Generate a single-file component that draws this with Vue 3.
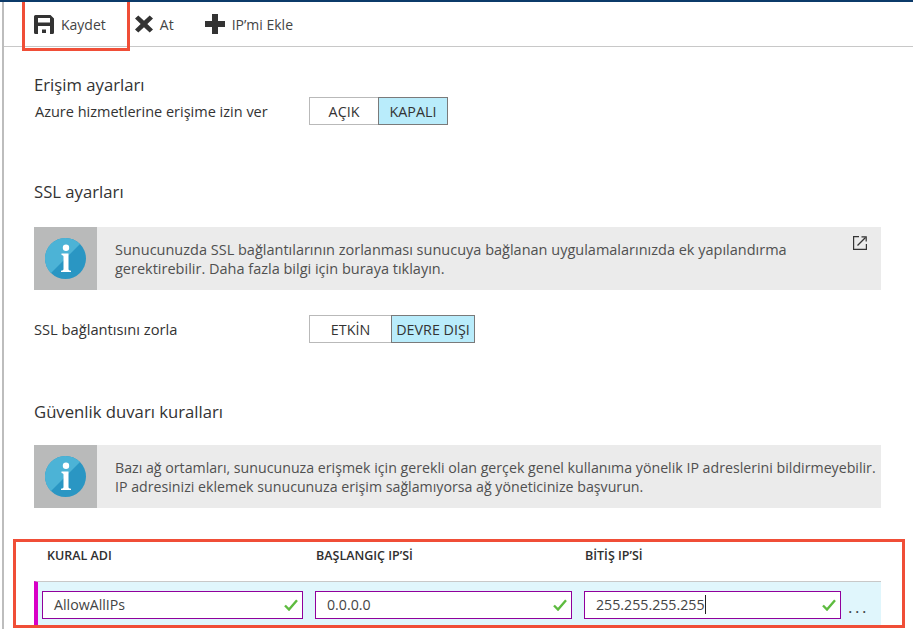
<script setup>
const rules = [
  { value: 'AllowAllIPs', caret: false },
  { value: '0.0.0.0', caret: false },
  { value: '255.255.255.255', caret: true },
]
</script>

<template>
  <div class="page">
    <div class="toolbar">
      <div class="tool save">
        <svg width="20" height="19" viewBox="0 0 20 19"><path fill="#333" fill-rule="evenodd" d="M1.500 0H16.500L20 3.500V17.500A1.500 1.500 0 0 1 18.500 19H1.500A1.500 1.500 0 0 1 0 17.500V1.500A1.500 1.500 0 0 1 1.500 0ZM4 3V7.500H16V3ZM4 11V19H16V11Z"/><rect x="8" y="14.500" width="4" height="3.500" fill="#333"/></svg>
        <span>Kaydet</span>
      </div>
      <div class="tool discard">
        <svg width="18" height="18" viewBox="0 0 19 18"><path fill="#333" d="M3.500 0 9.500 5.500 15.500 0 19 3.300 13 9l6 5.700L15.500 18 9.500 12.500 3.500 18 0 14.700 6 9 0 3.300Z"/></svg>
        <span>At</span>
      </div>
      <div class="tool add">
        <svg width="20" height="20" viewBox="0 0 20 20"><path fill="#333" d="M7 0h6v7h7v6h-7v7H7v-7H0V7h7Z"/></svg>
        <span>IP’mi Ekle</span>
      </div>
    </div>

    <div class="content">
      <h2 class="h-access">Erişim ayarları</h2>
      <div class="setting s-access">
        <span class="setting-label">Azure hizmetlerine erişime izin ver</span>
        <div class="toggle t-access">
          <span class="opt off">AÇIK</span>
          <span class="opt on">KAPALI</span>
        </div>
      </div>

      <h2 class="h-ssl">SSL ayarları</h2>
      <div class="info i-ssl">
        <div class="info-icon">
          <svg width="41" height="41" viewBox="0 0 41 41">
            <circle cx="20.500" cy="20.500" r="20.500" fill="#2a96c3"/>
            <path fill="#4cb3d6" d="M20.500 0A20.500 20.500 0 0 0 6 35L35 6A20.440 20.440 0 0 0 20.500 0Z"/>
            <circle cx="21" cy="9.700" r="3.200" fill="#fff"/>
            <path fill="#fff" d="M16.500 15.500h7v15.500c0 1 .9 1.500 2.500 1.700v1.300H16v-1.300c1.600-.2 2.500-.7 2.500-1.700V18.500c0-1-.8-1.500-2-1.600Z"/>
          </svg>
        </div>
        <p class="info-text narrow">Sunucunuzda SSL bağlantılarının zorlanması sunucuya bağlanan uygulamalarınızda ek yapılandırma gerektirebilir. Daha fazla bilgi için buraya tıklayın.</p>
        <svg class="external" width="14" height="14" viewBox="0 0 14 14" fill="none" stroke="#333" stroke-width="1.200"><path d="M6 .6H.6v12.800h12.800V8"/><path d="M4.500 9.500 12.500 1.500"/><path d="M8.500.8h4.700v4.700"/></svg>
      </div>
      <div class="setting s-ssl">
        <span class="setting-label">SSL bağlantısını zorla</span>
        <div class="toggle t-ssl">
          <span class="opt off">ETKİN</span>
          <span class="opt on">DEVRE DIŞI</span>
        </div>
      </div>

      <h2 class="h-fw">Güvenlik duvarı kuralları</h2>
      <div class="info i-fw">
        <div class="info-icon">
          <svg width="41" height="41" viewBox="0 0 41 41">
            <circle cx="20.500" cy="20.500" r="20.500" fill="#2a96c3"/>
            <path fill="#4cb3d6" d="M20.500 0A20.500 20.500 0 0 0 6 35L35 6A20.440 20.440 0 0 0 20.500 0Z"/>
            <circle cx="21" cy="9.700" r="3.200" fill="#fff"/>
            <path fill="#fff" d="M16.500 15.500h7v15.500c0 1 .9 1.500 2.500 1.700v1.300H16v-1.300c1.600-.2 2.500-.7 2.500-1.700V18.500c0-1-.8-1.500-2-1.600Z"/>
          </svg>
        </div>
        <p class="info-text wide">Bazı ağ ortamları, sunucunuza erişmek için gerekli olan gerçek genel kullanıma yönelik IP adreslerini bildirmeyebilir. IP adresinizi eklemek sunucunuza erişim sağlamıyorsa ağ yöneticinize başvurun.</p>
      </div>

      <div class="grid-head">
        <span class="col c1">KURAL ADI</span>
        <span class="col c2">BAŞLANGIÇ IP’Sİ</span>
        <span class="col c3">BİTİŞ IP’Sİ</span>
      </div>
      <div class="row">
        <div v-for="(r, i) in rules" :key="i" class="field" :class="'f' + i">
          <span class="value">{{ r.value }}<i v-if="r.caret" class="caret"></i></span>
          <svg class="check" width="14" height="12" viewBox="0 0 14 12" fill="none" stroke="#5dbb3f" stroke-width="2.400"><path d="M1 6.500 5 10.500 13 1.200"/></svg>
        </div>
        <span class="more">...</span>
      </div>
    </div>

    <div class="mark mark-top"></div>
    <div class="mark mark-bottom"></div>
  </div>
</template>

<style>
html, body { margin: 0; background: #fff; }
</style>

<style scoped>
.page {
  position: relative;
  width: 913px;
  height: 629px;
  overflow: hidden;
  box-sizing: border-box;
  border-top: 2px solid #0b3a69;
  background: #fff;
  font-family: "Open Sans", "Noto Sans", sans-serif;
  color: #333;
}
.page::before {
  content: "";
  position: absolute;
  left: 2px;
  top: 0;
  bottom: 0;
  width: 2px;
  background: #bdbdbd;
}
.toolbar {
  display: flex;
  align-items: center;
  height: 44px;
  margin-left: 4px;
  padding-left: 30px;
  border-bottom: 1px solid #c8c8c8;
  font-size: 14px;
  color: #444;
}
.tool { display: flex; align-items: center; gap: 7px; }
.discard { margin-left: 29px; }
.add { margin-left: 31px; }
.content { padding-left: 34px; width: 847px; }
h2 {
  margin: 0;
  font-weight: 400;
  font-size: 16.7px;
  line-height: 22px;
  color: #333;
}
.h-access { margin-top: 27px; }
.setting { display: flex; align-items: center; }
.setting-label { width: 275px; font-size: 14.5px; color: #333; }
.s-access { margin-top: 1px; padding-left: 1px; }
.s-access .setting-label { width: 274px; }
.s-ssl { margin-top: 25px; }
.s-ssl .setting-label { font-size: 14.7px; }
.toggle { display: flex; height: 28px; font-size: 14.3px; color: #333; }
.opt {
  display: flex;
  align-items: center;
  justify-content: center;
  box-sizing: border-box;
  height: 100%;
  border: 1px solid #b9b9b9;
}
.opt.off { border-right: 0; }
.opt.on { background: #b9ecfb; border-color: #7a7a7a; }
.t-access .off { width: 69px; }
.t-access .on { width: 70px; }
.t-ssl .off { width: 82px; }
.t-ssl .on { width: 84px; }
.h-ssl { margin-top: 56px; }
.h-fw { margin-top: 58px; }
.info {
  position: relative;
  display: flex;
  align-items: center;
  height: 63px;
  background: #ebebeb;
}
.i-ssl { margin-top: 24px; }
.i-fw { margin-top: 22px; }
.info-icon {
  flex: none;
  display: flex;
  align-items: center;
  justify-content: center;
  width: 63px;
  height: 100%;
  background: #b9baba;
}
.info-text {
  margin: 0 0 0 18px;
  line-height: 19px;
  color: #505050;
}
.info-text.narrow { width: 735px; font-size: 14.5px; }
.info-text.wide { width: 768px; font-size: 14.2px; }
.external { position: absolute; top: 9px; right: 14px; }
.grid-head {
  display: flex;
  align-items: center;
  height: 22px;
  margin-top: 36px;
  font-size: 12.5px;
  font-weight: 600;
  color: #2f2f2f;
}
.col { flex: none; }
.c1 { margin-left: 13px; width: 269px; }
.c2 { width: 269px; }
.row {
  display: flex;
  align-items: center;
  box-sizing: border-box;
  height: 46px;
  margin-top: 15px;
  padding-left: 4px;
  border-top: 1px solid #c8c8c8;
  border-left: 4px solid #d800c6;
  background: #e0f6fc;
}
.field {
  display: flex;
  align-items: center;
  justify-content: space-between;
  box-sizing: border-box;
  height: 28px;
  padding: 0 4px 0 11px;
  border: 1px solid #90009c;
  background: #fff;
  font-size: 14.2px;
  color: #444;
}
.f0 { width: 261px; }
.f1 { width: 257px; margin-left: 12px; }
.f2 { width: 257px; margin-left: 12px; }
.value { display: flex; align-items: center; }
.caret {
  display: block;
  width: 1px;
  height: 19px;
  background: #222;
}
.more {
  margin: 3px 0 0 7px;
  font-size: 17px;
  letter-spacing: 2.500px;
  color: #444;
}
.mark {
  position: absolute;
  box-sizing: border-box;
  border: 3px solid #f04e37;
  pointer-events: none;
}
.mark-top { left: 22px; top: -4px; width: 108px; height: 53px; }
.mark-bottom { left: 13px; top: 537px; width: 892px; height: 89px; }
</style>
